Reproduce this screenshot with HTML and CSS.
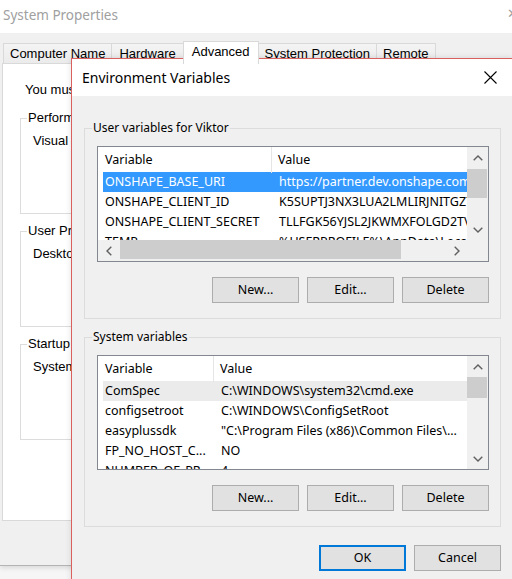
FILE: index.html
```html
<!DOCTYPE html>
<html lang="en">
<head>
<meta charset="utf-8">
<title>Environment Variables</title>
<link rel="stylesheet" href="styles.css">
</head>
<body>
<div class="sysprops">
  <div class="sp-titlebar">
    <span class="sp-title">System Properties</span>
    <span class="sp-close">✕</span>
  </div>
  <div class="sp-body">
    <div class="sp-tabs">
      <div class="sp-tab">Computer Name</div>
      <div class="sp-tab sp-tab-wide">Hardware</div>
      <div class="sp-tab sp-tab-active">Advanced</div>
      <div class="sp-tab">System Protection</div>
      <div class="sp-tab">Remote</div>
    </div>
    <div class="sp-panel">
      <p class="sp-note">You must be logged on as an Administrator to make most of these changes.</p>
      <fieldset class="sp-group">
        <legend>Performance</legend>
        <div class="sp-group-text">Visual effects, processor scheduling, memory usage, and virtual memory</div>
      </fieldset>
      <fieldset class="sp-group">
        <legend>User Profiles</legend>
        <div class="sp-group-text">Desktop settings related to your sign-in</div>
      </fieldset>
      <fieldset class="sp-group">
        <legend>Startup and Recovery</legend>
        <div class="sp-group-text">System startup, system failure, and debugging information</div>
      </fieldset>
    </div>
  </div>
</div>

<div class="dlg">
  <div class="dlg-titlebar">
    <span class="dlg-title">Environment Variables</span>
    <svg class="dlg-close" width="13" height="13" viewBox="0 0 13 13"><path d="M0.5 0.5 L12.5 12.5 M12.5 0.5 L0.5 12.5" stroke="#000" stroke-width="1.1" fill="none"/></svg>
  </div>
  <div class="dlg-body">
    <fieldset class="grp">
      <legend>User variables for Viktor</legend>
      <div class="lv lv-user">
        <div class="lv-main">
          <div class="lv-head">
            <div class="h1">Variable</div>
            <div class="h2">Value</div>
          </div>
          <div class="lv-row selected"><div class="c1">ONSHAPE_BASE_URI</div><div class="c2">https://partner.dev.onshape.com</div></div>
          <div class="lv-row"><div class="c1">ONSHAPE_CLIENT_ID</div><div class="c2">K5SUPTJ3NX3LUA2LMLIRJNITGZ7XQ</div></div>
          <div class="lv-row"><div class="c1">ONSHAPE_CLIENT_SECRET</div><div class="c2">TLLFGK56YJSL2JKWMXFOLGD2TVQ</div></div>
          <div class="lv-row"><div class="c1">TEMP</div><div class="c2">%USERPROFILE%\AppData\Local\Temp</div></div>
        </div>
        <div class="vscroll">
          <div class="sb-btn"><svg width="10" height="6" viewBox="0 0 10 6"><path d="M0.7 5.3 L5 1 L9.3 5.3" stroke="#606060" stroke-width="1.4" fill="none"/></svg></div>
          <div class="sb-track"><div class="vthumb vthumb-user"></div></div>
          <div class="sb-btn"><svg width="10" height="6" viewBox="0 0 10 6"><path d="M0.7 0.7 L5 5 L9.3 0.7" stroke="#606060" stroke-width="1.4" fill="none"/></svg></div>
        </div>
        <div class="hscroll">
          <div class="sb-btn"><svg width="6" height="10" viewBox="0 0 6 10"><path d="M5.3 0.7 L1 5 L5.3 9.3" stroke="#606060" stroke-width="1.4" fill="none"/></svg></div>
          <div class="sb-htrack"><div class="hthumb"></div></div>
          <div class="sb-btn"><svg width="6" height="10" viewBox="0 0 6 10"><path d="M0.7 0.7 L5 5 L0.7 9.3" stroke="#606060" stroke-width="1.4" fill="none"/></svg></div>
        </div>
        <div class="corner"></div>
      </div>
      <div class="btn-row">
        <button class="btn">New...</button>
        <button class="btn">Edit...</button>
        <button class="btn">Delete</button>
      </div>
    </fieldset>

    <fieldset class="grp grp-sys">
      <legend>System variables</legend>
      <div class="lv lv-sys">
        <div class="lv-main">
          <div class="lv-head">
            <div class="h1">Variable</div>
            <div class="h2">Value</div>
          </div>
          <div class="lv-row hot"><div class="c1">ComSpec</div><div class="c2">C:\WINDOWS\system32\cmd.exe</div></div>
          <div class="lv-row"><div class="c1">configsetroot</div><div class="c2">C:\WINDOWS\ConfigSetRoot</div></div>
          <div class="lv-row"><div class="c1">easyplussdk</div><div class="c2">"C:\Program Files (x86)\Common Files\...</div></div>
          <div class="lv-row"><div class="c1">FP_NO_HOST_C...</div><div class="c2">NO</div></div>
          <div class="lv-row"><div class="c1">NUMBER_OF_PR...</div><div class="c2">4</div></div>
        </div>
        <div class="vscroll">
          <div class="sb-btn"><svg width="10" height="6" viewBox="0 0 10 6"><path d="M0.7 5.3 L5 1 L9.3 5.3" stroke="#606060" stroke-width="1.4" fill="none"/></svg></div>
          <div class="sb-track"><div class="vthumb vthumb-sys"></div></div>
          <div class="sb-btn"><svg width="10" height="6" viewBox="0 0 10 6"><path d="M0.7 0.7 L5 5 L9.3 0.7" stroke="#606060" stroke-width="1.4" fill="none"/></svg></div>
        </div>
      </div>
      <div class="btn-row">
        <button class="btn">New...</button>
        <button class="btn">Edit...</button>
        <button class="btn">Delete</button>
      </div>
    </fieldset>

    <div class="dlg-footer">
      <button class="btn btn-default">OK</button>
      <button class="btn">Cancel</button>
    </div>
  </div>
</div>
</body>
</html>
```

FILE: styles.css
```css
html, body {
  margin: 0;
  padding: 0;
  width: 512px;
  height: 579px;
  overflow: hidden;
}

body {
  position: relative;
  background: #f6f6f6;
  font-family: "Noto Sans", sans-serif;
  color: #000;
}

/* ---------- background window: System Properties ---------- */
.sysprops {
  width: 512px;
  height: 565px;
  overflow: hidden;
  border-bottom: 1px solid #b4b4b4;
  box-shadow: 0 2px 5px rgba(0, 0, 0, 0.12);
}

.sp-titlebar {
  height: 33px;
  background: #fff;
  display: flex;
  align-items: center;
  justify-content: space-between;
  padding-left: 3px;
}

.sp-title {
  font-family: "Noto Sans", sans-serif;
  font-size: 13.5px;
  color: #a0a0a0;
  margin-top: -3px;
}

.sp-close {
  font-size: 13px;
  color: #a0a0a0;
  margin-right: -6px;
  margin-top: -8px;
}

.sp-body {
  background: #f0f0f0;
  height: 532px;
  padding: 10px 0 0 2px;
  box-sizing: border-box;
}

.sp-tabs {
  display: flex;
  align-items: flex-end;
  height: 20px;
  padding-left: 1px;
  font-family: "Liberation Sans", Arial, sans-serif;
  font-size: 13px;
}

.sp-tab {
  height: 20px;
  box-sizing: border-box;
  padding: 0 6px;
  line-height: 20px;
  border: 1px solid #d9d9d9;
  border-bottom: none;
  background: linear-gradient(#f4f4f4, #ebebeb);
  margin-left: -1px;
  white-space: nowrap;
}

.sp-tab:first-child {
  margin-left: 0;
}

.sp-tab-wide {
  padding: 0 7px;
}

.sp-tab-active {
  height: 23px;
  margin-bottom: -1px;
  background: #fff;
  position: relative;
  z-index: 1;
  line-height: 19px;
  padding: 0 8px;
}

.sp-panel {
  width: 540px;
  height: 458px;
  box-sizing: border-box;
  background: #fff;
  border: 1px solid #d9d9d9;
  padding: 18px 0 0 17px;
  font-family: "Liberation Sans", Arial, sans-serif;
  font-size: 13px;
}

.sp-note {
  margin: 0 0 0 5px;
  line-height: 16px;
  white-space: nowrap;
}

.sp-group {
  margin: 12px 0 0 0;
  padding: 7px 12px 0 12px;
  width: 480px;
  border: 1px solid #dcdcdc;
  min-width: 0;
}

.sp-group + .sp-group {
  margin-top: 9px;
}

.sp-group legend {
  margin-left: -6px;
  padding: 0 1px;
  line-height: 16px;
}

.sp-group-text {
  height: 80px;
  line-height: 16px;
  white-space: nowrap;
}

/* ---------- foreground dialog ---------- */
.dlg {
  position: absolute;
  left: 71px;
  top: 58px;
  width: 442px;
  height: 540px;
  box-sizing: border-box;
  border: 1px solid #d9605f;
  background: #f0f0f0;
  box-shadow: 0 0 6px rgba(0, 0, 0, 0.12);
}

.dlg-titlebar {
  height: 37px;
  background: #fff;
  display: flex;
  align-items: center;
  justify-content: space-between;
  padding: 0 15px 0 10px;
}

.dlg-title {
  font-size: 14px;
  margin-top: -1px;
}

.dlg-close {
  display: block;
}

.dlg-body {
  padding: 24px 11px 0 12px;
  font-size: 12px;
}

.grp {
  margin: 0;
  padding: 10px 11px 15px 12px;
  border: 1px solid #dcdcdc;
  min-width: 0;
}

.grp-sys {
  margin-top: 10px;
}

.grp legend {
  margin-left: -5px;
  padding: 0 1px;
  line-height: 16px;
  font-size: 12px;
}

.lv {
  border: 1px solid #828790;
  background: #fff;
  display: grid;
  grid-template-columns: minmax(0, 1fr) 21px;
  font-size: 12.5px;
}

.lv-user {
  height: 116px;
  grid-template-rows: minmax(0, 1fr) 21px;
  box-sizing: border-box;
}

.lv-sys {
  height: 115px;
  grid-template-rows: minmax(0, 1fr);
  box-sizing: border-box;
}

.lv-main {
  overflow: hidden;
  white-space: nowrap;
}

.lv-head {
  display: grid;
  height: 25px;
  line-height: 26px;
}

.lv-user .lv-head { grid-template-columns: 174px minmax(0, 1fr); }
.lv-sys .lv-head { grid-template-columns: 116px minmax(0, 1fr); }

.lv-head .h1 {
  padding-left: 7px;
  border-right: 1px solid #e5e5e5;
}

.lv-head .h2 {
  padding-left: 6px;
}

.lv-row {
  display: grid;
  height: 20px;
  line-height: 20px;
  margin-left: 5px;
}

.lv-user .lv-row { grid-template-columns: 169px minmax(0, 1fr); }
.lv-sys .lv-row { grid-template-columns: 111px minmax(0, 1fr); }

.lv-row .c1 {
  padding-left: 2px;
  overflow: hidden;
}

.lv-row .c2 {
  padding-left: 7px;
  overflow: hidden;
}

.lv-row.selected {
  background: #3399ff;
  color: #fff;
}

.lv-row.hot {
  background: #ebebeb;
}

.vscroll {
  background: #f0f0f0;
  display: flex;
  flex-direction: column;
}

.sb-btn {
  width: 21px;
  height: 21px;
  flex: 0 0 21px;
  display: flex;
  align-items: center;
  justify-content: center;
}

.sb-track {
  flex: 1;
  position: relative;
}

.vthumb {
  background: #cdcdcd;
  margin: 0 1px 0 0;
}

.vthumb-user {
  margin-top: 1px;
  height: 29px;
}

.vthumb-sys {
  height: 21px;
}

.hscroll {
  background: #f0f0f0;
  display: flex;
}

.sb-htrack {
  flex: 1;
  display: flex;
  align-items: flex-start;
}

.hthumb {
  background: #cdcdcd;
  width: 281px;
  height: 19px;
  margin-left: 1px;
}

.corner {
  background: #f0f0f0;
}

.btn-row {
  display: flex;
  justify-content: flex-end;
  gap: 8px;
  margin-top: 15px;
}

.btn {
  width: 87px;
  height: 26px;
  box-sizing: border-box;
  background: #e1e1e1;
  border: 1px solid #adadad;
  font-family: "Noto Sans", sans-serif;
  font-size: 12.5px;
  color: #000;
  padding: 0;
  line-height: 22px;
}

.btn-default {
  border: 2px solid #0078d7;
}

.dlg-footer {
  display: flex;
  justify-content: flex-end;
  gap: 8px;
  margin-top: 18px;
}
```
